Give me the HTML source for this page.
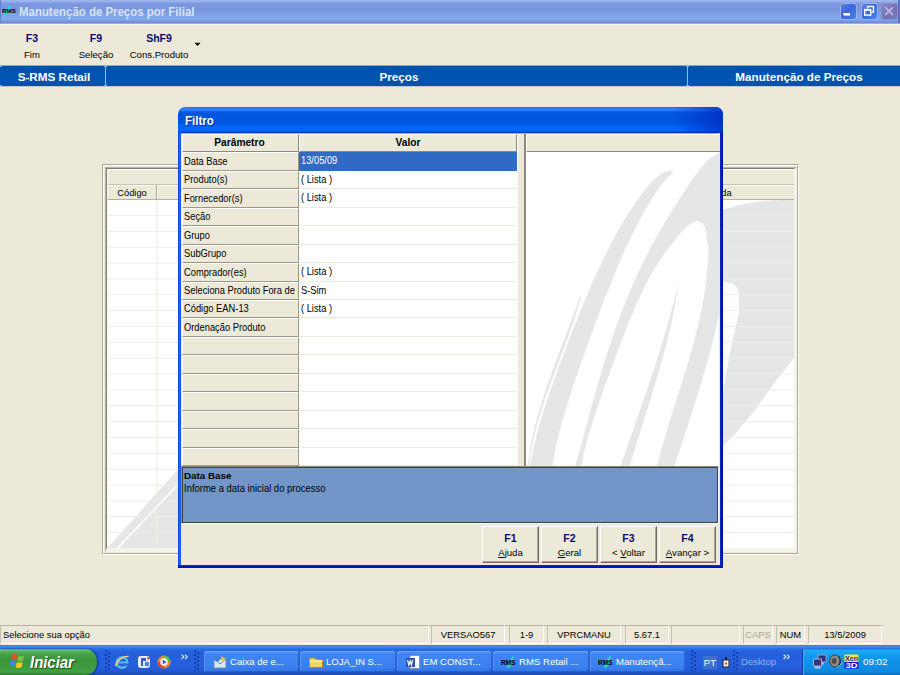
<!DOCTYPE html>
<html>
<head>
<meta charset="utf-8">
<title>Manutenção de Preços por Filial</title>
<style>
*{box-sizing:border-box;margin:0;padding:0}
html,body{width:900px;height:675px;overflow:hidden;background:#ece9d8;font-family:"Liberation Sans",sans-serif;font-size:10px;color:#000}
.abs{position:absolute}
#root{position:relative;width:900px;height:675px;overflow:hidden;background:#ece9d8}
#tbar{left:0;top:0;width:900px;height:23px;background:linear-gradient(to bottom,#9cb5ec 0px,#98b2eb 1.5px,#7f9ce2 3px,#7a96df 4.5px,#7a96df 11px,#7e9fe4 13.5px,#80a7e8 16px,#80a7e8 20px,#7792dd 21.5px,#7189d8 23px)}
#tbar .ttl{left:19px;top:4px;font-weight:bold;font-size:12.5px;color:#d9e3f8;white-space:nowrap;line-height:16px;transform:scaleX(0.915);transform-origin:0 0}
#wline{left:0;top:23px;width:900px;height:2px;background:linear-gradient(to bottom,#aaa9b4 0,#aaa9b4 1px,#f8f6ec 1px,#f8f6ec 2px)}
.wb{position:absolute;top:3px;width:17px;height:17px;border-radius:3px;border:1px solid #9db2ec;background:linear-gradient(135deg,#5b84e6 0,#3f66d8 45%,#4477e4 80%,#4d86ee 100%);overflow:hidden}
.wb svg{position:absolute;left:-1px;top:-1px}
.tb{position:absolute;text-align:center;white-space:nowrap}
.tb b{display:block;font-size:10.5px;color:#0a0a6e;line-height:12px}
.tb span{display:block;font-size:9.6px;line-height:12px;margin-top:5px}
#bbar{left:0;top:66px;width:900px;height:20px;background:#0054b0}
#bbar .t{position:absolute;top:3px;font-weight:bold;font-size:11.7px;color:#fff;line-height:16px;white-space:nowrap;transform:translateX(-50%)}
#bbar .dv{position:absolute;top:0;width:1px;height:20px;background:#93bdec}
.sp{position:absolute;top:625px;height:19px;border:1px solid;border-color:#b5b2a3 #fff #fff #c2bfaf;font-size:9.4px;line-height:17px;text-align:center;white-space:nowrap}
.hd{position:absolute;background:#ece9d8;border:1px solid;border-color:#fff #8d8a7a #8d8a7a #fff;font-weight:bold;font-size:10.2px;line-height:16px;text-align:center;white-space:nowrap}
.pc{position:absolute;left:182px;width:117px;background:#ece9d8;border:1px solid;border-color:#fff #9a9788 #9a9788 #fff;font-size:10.3px;padding:0 0 1px 1px;white-space:nowrap;overflow:hidden;display:flex;align-items:center}
.vc{position:absolute;left:299px;width:218px;border-bottom:1px solid #efecdf;font-size:10.3px;padding-left:2px;white-space:nowrap}
.btn{position:absolute;top:526px;width:57px;height:37px;border:1px solid;border-color:#fff #716f64 #716f64 #fff;box-shadow:inset -1px -1px 0 #aca899;text-align:center;white-space:nowrap}
.btn b{display:block;font-size:10.5px;color:#0a0a6e;line-height:12px;margin-top:5px}
.btn span{display:block;font-size:9.6px;line-height:12px;margin-top:3px}
.sx{display:inline-block;transform:scaleX(0.905);transform-origin:0 50%;white-space:nowrap}
.hdl{position:absolute;top:5px;width:6px;height:21px;background-image:radial-gradient(circle at 1.2px 1.2px,#173fa8 0.9px,rgba(0,0,0,0) 1.3px),radial-gradient(circle at 4.2px 3.2px,#173fa8 0.9px,rgba(0,0,0,0) 1.3px);background-size:6px 4px}
.tbtn{position:absolute;top:6px;height:21px;border-radius:3px;background:linear-gradient(to bottom,#5a9bf6 0,#3f86f3 3px,#3a80f0 16px,#3274e4 21px);box-shadow:inset 1px 1px 0 rgba(120,170,255,0.5),inset -1px -1px 0 rgba(20,60,170,0.4);color:#fff;font-size:9.6px;line-height:21px;white-space:nowrap;overflow:hidden}
.tbtn svg{position:absolute;left:8px;top:3px}
.tbtn span{position:absolute;left:26px;top:0}
</style>
</head>
<body>
<div id="root">
<div id="tbar" class="abs"><div class="abs ttl">Manutenção de Preços por Filial</div></div>
<div id="wline" class="abs"></div>
<div class="abs" style="left:0;top:0;width:1px;height:23px;background:#6a7fd0"></div>
<div class="abs" style="left:898px;top:0;width:2px;height:23px;background:#5f6fc4"></div>
<svg class="abs" style="left:2px;top:4px" width="15" height="13" viewBox="0 0 15 13"><path d="M2,11.5 C3,7 6.5,2 8.8,0.8 C9.2,4.5 6.5,9.5 2.6,11.8Z" fill="#19e0d0"/><text x="0" y="8.6" font-family="Liberation Sans,sans-serif" font-weight="bold" font-size="4.6" fill="#000" textLength="14" lengthAdjust="spacingAndGlyphs">RMS</text></svg>
<div class="wb" style="left:840px"><svg width="17" height="17" viewBox="0 0 17 17"><rect x="3.5" y="10" width="6.5" height="2.6" fill="#fff"/></svg></div>
<div class="wb" style="left:861px"><svg width="17" height="17" viewBox="0 0 17 17"><path d="M6.5,5.5 V3.5 H12.5 V9 H10.5" fill="none" stroke="#fff" stroke-width="1.4"/><rect x="3.7" y="6.6" width="6" height="5.5" fill="none" stroke="#fff" stroke-width="1.4"/><rect x="3.7" y="6.4" width="6" height="1.4" fill="#fff"/></svg></div>
<div class="wb" style="left:881px;background:linear-gradient(135deg,#8a86c4,#7472b4 60%,#7a78ba);border-color:#8f8cc8"><svg width="17" height="17" viewBox="0 0 17 17"><path d="M4.2,4.2 L12,12 M12,4.2 L4.2,12" stroke="#b9b4dc" stroke-width="1.8" fill="none"/></svg></div>
<svg class="abs" style="left:194px;top:42px" width="7" height="5" viewBox="0 0 7 5"><path d="M0.5,0.8 H6.5 L3.5,4Z" fill="#000"/></svg>
<div class="tb" style="left:12px;top:32px;width:40px"><b>F3</b><span>Fim</span></div>
<div class="tb" style="left:70px;top:32px;width:52px"><b>F9</b><span>Seleção</span></div>
<div class="tb" style="left:124px;top:32px;width:70px"><b>ShF9</b><span>Cons.Produto</span></div>
<div class="abs" style="left:0;top:65px;width:900px;height:1px;background:#8fa8c8"></div><div class="abs" style="left:0;top:86px;width:900px;height:1px;background:#c0c6cf"></div>
<div id="bbar" class="abs">
  <div class="t" style="left:54px">S-RMS Retail</div>
  <div class="t" style="left:399px">Preços</div>
  <div class="t" style="left:799px">Manutenção de Preços</div>
  <div class="dv" style="left:105px"></div><div class="abs" style="left:104px;top:0;width:3px;height:1px;background:#7fb0e6"></div><div class="abs" style="left:104px;top:19px;width:3px;height:1px;background:#7fb0e6"></div>
  <div class="abs" style="left:686px;top:0;width:3px;height:1px;background:#7fb0e6"></div><div class="abs" style="left:686px;top:19px;width:3px;height:1px;background:#7fb0e6"></div>
  <div class="abs" style="left:0;top:0;width:2px;height:1px;background:#7fb0e6"></div><div class="abs" style="left:0;top:19px;width:2px;height:1px;background:#7fb0e6"></div>
  <div class="dv" style="left:687px"></div>
</div>
<div class="abs" style="left:102px;top:164px;width:697px;height:391px;border:1px solid;border-color:#aca899 #fff #fff #aca899"></div>
<div class="abs" style="left:103px;top:165px;width:695px;height:389px;border:1px solid;border-color:#fff #aca899 #aca899 #fff"></div>
<div class="abs" style="left:105px;top:167px;width:692px;height:385px;border:1px solid;border-color:#b9b6a7 #f5f3ea #f5f3ea #b9b6a7"></div>
<div class="abs" style="left:794px;top:169px;width:3px;height:383px;background:#f5f3ea"></div>
<div class="abs" style="left:107px;top:548px;width:690px;height:4px;background:#f5f3ea"></div>
<div class="abs" style="left:106px;top:168px;width:689px;height:381px;border:1px solid;border-color:#817e6f #f5f3ea #f5f3ea #817e6f"></div>
<div class="abs" id="mgrid" style="left:107px;top:169px;width:687px;height:379px;background:#fff;overflow:hidden">
<svg class="abs" style="left:0;top:0" width="687" height="379" viewBox="107 169 687 379">
  <path d="M107.5,548 L178,469.5 L178,548 Z" fill="#e5e7e6"/>
  <path d="M116.5,548 L176,485.5 L178,485.5 L119,548 Z" fill="#fff"/>
  <path d="M722,210.5 C732,206.5 750,202 770,200.6 L794,199.5 L794,358 L775,382 L755,410 L735,434 L722,447 Z" fill="#e5e7e6"/>
  <path d="M722,281 L733,284 Q739,288 739,296 L739,312 L735,330 L730,352 L726,375 L722,396 Z" fill="#fff"/>
  <line x1="107" x2="794" y1="215.6" y2="215.6" stroke="#f0ede1" stroke-width="1"/>
  <line x1="107" x2="794" y1="231.5" y2="231.5" stroke="#f0ede1" stroke-width="1"/>
  <line x1="107" x2="794" y1="247.3" y2="247.3" stroke="#f0ede1" stroke-width="1"/>
  <line x1="107" x2="794" y1="263.2" y2="263.2" stroke="#f0ede1" stroke-width="1"/>
  <line x1="107" x2="794" y1="279.0" y2="279.0" stroke="#f0ede1" stroke-width="1"/>
  <line x1="107" x2="794" y1="294.8" y2="294.8" stroke="#f0ede1" stroke-width="1"/>
  <line x1="107" x2="794" y1="310.7" y2="310.7" stroke="#f0ede1" stroke-width="1"/>
  <line x1="107" x2="794" y1="326.5" y2="326.5" stroke="#f0ede1" stroke-width="1"/>
  <line x1="107" x2="794" y1="342.4" y2="342.4" stroke="#f0ede1" stroke-width="1"/>
  <line x1="107" x2="794" y1="358.2" y2="358.2" stroke="#f0ede1" stroke-width="1"/>
  <line x1="107" x2="794" y1="374.0" y2="374.0" stroke="#f0ede1" stroke-width="1"/>
  <line x1="107" x2="794" y1="389.9" y2="389.9" stroke="#f0ede1" stroke-width="1"/>
  <line x1="107" x2="794" y1="405.7" y2="405.7" stroke="#f0ede1" stroke-width="1"/>
  <line x1="107" x2="794" y1="421.6" y2="421.6" stroke="#f0ede1" stroke-width="1"/>
  <line x1="107" x2="794" y1="437.4" y2="437.4" stroke="#f0ede1" stroke-width="1"/>
  <line x1="107" x2="794" y1="453.2" y2="453.2" stroke="#f0ede1" stroke-width="1"/>
  <line x1="107" x2="794" y1="469.1" y2="469.1" stroke="#f0ede1" stroke-width="1"/>
  <line x1="107" x2="794" y1="484.9" y2="484.9" stroke="#f0ede1" stroke-width="1"/>
  <line x1="107" x2="794" y1="500.8" y2="500.8" stroke="#f0ede1" stroke-width="1"/>
  <line x1="107" x2="794" y1="516.6" y2="516.6" stroke="#f0ede1" stroke-width="1"/>
  <line x1="107" x2="794" y1="532.4" y2="532.4" stroke="#f0ede1" stroke-width="1"/>
  <line x1="107" x2="794" y1="548.3" y2="548.3" stroke="#f0ede1" stroke-width="1"/>
  <line x1="156.8" x2="156.8" y1="199" y2="548" stroke="#f0ede1" stroke-width="1"/>
</svg>
<div class="abs" style="left:0;top:0;width:687px;height:16px;background:#ece9d8;border-top:1px solid #fff;border-left:1px solid #fff;border-bottom:1px solid #c6c3b3"></div>
<div class="abs" style="left:0;top:16px;width:687px;height:15px;background:#ece9d8;border-top:1px solid #fbfaf5;border-left:1px solid #fff;border-bottom:1px solid #b5b2a2"></div>
<div class="abs" style="left:49px;top:16px;width:1px;height:15px;background:#aca899"></div>
<div class="abs" style="left:50px;top:17px;width:1px;height:13px;background:#fbfaf5"></div>
<div class="abs" style="left:0;top:18px;width:50px;text-align:center;font-size:9.3px;line-height:12px">Código</div>
<div class="abs" style="left:607.5px;top:18px;font-size:9.3px;line-height:12px">cida</div>
</div>
<div class="abs" id="dlg" style="left:178px;top:107px;width:545px;height:461px;background:#ece9d8;border-radius:7px 7px 0 0;overflow:hidden">
 <div class="abs" style="left:0;top:0;width:545px;height:26px;background:linear-gradient(to bottom,#2162e0 0,#2f80f6 1px,#2a7cf4 3px,#0a5ce8 5px,#0055e0 6.5px,#0055e0 16.5px,#0062f4 18.5px,#0066f8 20px,#0066f8 23.5px,#0a48cc 24.7px,#0a3cc0 26px)"></div>
 <div class="abs" style="left:495px;top:0;width:50px;height:26px;background:linear-gradient(to right,rgba(0,40,190,0),rgba(0,40,190,0.75))"></div>
 <div class="abs" style="left:7px;top:6px;font-weight:bold;font-size:12.5px;line-height:16px;color:#fff;text-shadow:1px 1px 0 #0a2a8a;transform:scaleX(0.92);transform-origin:0 0;white-space:nowrap">Filtro</div>
 <div class="abs" style="left:0;top:25px;width:3px;height:436px;background:linear-gradient(to right,#0a3fd8,#1e62ee,#1a5ae6)"></div>
 <div class="abs" style="left:542px;top:25px;width:3px;height:436px;background:linear-gradient(to right,#0a2fc8,#0019b4,#001590)"></div>
 <div class="abs" style="left:0;top:458px;width:545px;height:3px;background:linear-gradient(to bottom,#0a2fc8,#0019b4,#001590)"></div>
</div>
<div class="abs" style="left:181px;top:133px;width:538px;height:1px;background:#b0ad9e"></div>
<div class="abs" style="left:182px;top:134px;width:335px;height:332px;background:#fff"></div>
<div class="abs" style="left:517px;top:134px;width:7px;height:332px;background:#ece9d8;border-left:1px solid #fff"></div>
<div class="abs" style="left:524px;top:134px;width:2px;height:332px;background:#8d8a7a"></div>
<div class="abs" style="left:526px;top:134px;width:193px;height:332px;background:#fff"></div>
<svg class="abs" style="left:526px;top:152px" width="193" height="314" viewBox="526 152 193 314"><g fill="#e5e7e6">
 <path d="M670.3,170.8 C668.9,171.2 665.0,171.5 662.0,173.3 C659.0,175.1 655.3,178.4 652.0,181.7 C648.7,185.0 645.3,188.9 642.0,193.3 C638.7,197.7 634.4,204.7 632.0,208.3 C629.6,211.9 629.6,211.6 627.5,215.0 C625.3,218.4 621.7,224.3 619.0,229.0 C616.4,233.7 613.8,238.3 611.4,243.0 C608.9,247.7 606.6,252.3 604.3,257.0 C602.0,261.7 599.8,266.3 597.7,271.0 C595.5,275.7 593.5,280.3 591.4,285.0 C589.4,289.7 587.4,294.3 585.5,299.0 C583.5,303.7 581.6,308.3 579.7,313.0 C577.8,317.7 576.0,322.3 574.1,327.0 C572.3,331.7 570.5,336.3 568.7,341.0 C566.8,345.7 565.1,350.3 563.3,355.0 C561.5,359.7 559.8,364.3 558.1,369.0 C556.4,373.7 554.7,378.3 553.0,383.0 C551.4,387.7 549.8,392.3 548.2,397.0 C546.6,401.7 545.1,406.3 543.6,411.0 C542.1,415.7 540.7,420.3 539.4,425.0 C538.0,429.7 536.7,434.3 535.6,439.0 C534.4,443.7 533.3,448.5 532.4,453.0 C531.4,457.5 530.4,463.8 530.0,466.0 L552.6,466.0 C553.0,463.8 553.9,457.5 554.7,453.0 C555.6,448.5 556.6,443.7 557.7,439.0 C558.8,434.3 560.0,429.7 561.3,425.0 C562.5,420.3 563.9,415.7 565.3,411.0 C566.7,406.3 568.1,401.7 569.6,397.0 C571.1,392.3 572.6,387.7 574.2,383.0 C575.8,378.3 577.4,373.7 579.0,369.0 C580.6,364.3 582.3,359.7 583.9,355.0 C585.6,350.3 587.3,345.7 589.0,341.0 C590.7,336.3 592.4,331.7 594.1,327.0 C595.8,322.3 597.6,317.7 599.3,313.0 C601.1,308.3 602.9,303.7 604.7,299.0 C606.5,294.3 608.3,289.7 610.1,285.0 C612.0,280.3 613.9,275.7 615.8,271.0 C617.8,266.3 619.7,261.7 621.8,257.0 C623.9,252.3 625.9,247.7 628.1,243.0 C630.3,238.3 632.6,233.7 635.0,229.0 C637.4,224.3 640.7,218.2 642.4,215.0 C644.2,211.8 643.2,213.6 645.3,210.0 C647.4,206.4 652.0,198.3 655.3,193.3 C658.6,188.3 662.2,183.5 665.3,180.0 C668.4,176.5 672.3,173.8 673.7,172.5Z"/>
 <path d="M580.0,296.0 C578.6,300.0 573.8,313.7 571.5,320.0 C569.2,326.3 568.0,329.3 566.2,334.0 C564.5,338.7 562.7,343.3 560.9,348.0 C559.1,352.7 557.4,357.3 555.7,362.0 C553.9,366.7 552.2,371.3 550.6,376.0 C548.9,380.7 547.3,385.3 545.7,390.0 C544.2,394.7 542.6,399.3 541.2,404.0 C539.8,408.7 538.4,413.3 537.1,418.0 C535.9,422.7 534.6,427.3 533.6,432.0 C532.5,436.7 531.6,440.3 530.6,446.0 C529.6,451.7 528.1,462.7 527.6,466.0 L529.0,466.0 C529.5,462.7 531.0,451.7 532.0,446.0 C533.0,440.3 534.0,436.7 535.2,432.0 C536.3,427.3 537.6,422.7 539.0,418.0 C540.4,413.3 541.9,408.7 543.4,404.0 C544.9,399.3 546.6,394.7 548.2,390.0 C549.9,385.3 551.6,380.7 553.4,376.0 C555.1,371.3 556.9,366.7 558.6,362.0 C560.4,357.3 562.2,352.7 563.9,348.0 C565.7,343.3 567.4,338.7 569.1,334.0 C570.8,329.3 572.1,326.2 574.1,320.0 C576.1,313.8 579.8,300.8 581.0,297.0Z"/>
 <path d="M575.3,466.0 C575.9,463.7 577.9,456.7 579.2,452.0 C580.5,447.3 581.8,442.7 583.1,438.0 C584.4,433.3 585.6,428.7 586.9,424.0 C588.1,419.3 589.4,414.7 590.7,410.0 C591.9,405.3 593.2,400.7 594.5,396.0 C595.8,391.3 597.1,386.7 598.5,382.0 C599.8,377.3 601.2,372.7 602.6,368.0 C604.0,363.3 605.4,358.7 606.9,354.0 C608.4,349.3 609.9,344.7 611.5,340.0 C613.1,335.3 614.7,330.7 616.4,326.0 C618.0,321.3 619.8,316.7 621.6,312.0 C623.4,307.3 625.2,302.7 627.1,298.0 C629.1,293.3 631.1,288.7 633.1,284.0 C635.2,279.3 637.3,274.7 639.5,270.0 C641.7,265.3 644.0,260.7 646.4,256.0 C648.8,251.3 651.2,246.7 653.7,242.0 C656.3,237.3 658.9,232.7 661.6,228.0 C664.3,223.3 667.1,218.7 669.9,214.0 C672.8,209.3 676.8,203.2 678.8,200.0 C680.8,196.8 679.8,198.3 682.0,195.0 C684.2,191.7 688.7,184.7 692.0,180.0 C695.3,175.3 699.0,170.3 702.0,166.7 C705.0,163.1 707.0,160.8 710.3,158.3 C713.6,155.8 720.0,152.6 722.0,151.5 L722,300 C721.7,301.7 720.5,307.5 720.0,310.0 C719.5,312.5 719.7,311.8 719.1,315.0 C718.4,318.2 717.0,324.3 715.9,329.0 C714.8,333.7 713.7,338.3 712.5,343.0 C711.3,347.7 710.0,352.3 708.7,357.0 C707.4,361.7 706.1,366.3 704.7,371.0 C703.4,375.7 702.0,380.3 700.6,385.0 C699.2,389.7 697.7,394.3 696.3,399.0 C694.8,403.7 693.3,408.3 691.8,413.0 C690.3,417.7 688.8,422.3 687.3,427.0 C685.8,431.7 684.3,436.3 682.8,441.0 C681.2,445.7 679.6,450.8 678.2,455.0 C676.9,459.2 675.2,464.2 674.7,466.0 L657.2,466.0 C657.8,463.7 659.5,456.7 660.7,452.0 C662.0,447.3 663.3,442.7 664.7,438.0 C666.0,433.3 667.4,428.7 668.9,424.0 C670.3,419.3 671.8,414.7 673.2,410.0 C674.7,405.3 676.2,400.7 677.6,396.0 C679.1,391.3 680.6,386.7 682.1,382.0 C683.5,377.3 685.0,372.7 686.4,368.0 C687.8,363.3 689.2,358.7 690.5,354.0 C691.8,349.3 693.1,344.7 694.4,340.0 C695.6,335.3 696.8,330.7 697.9,326.0 C699.0,321.3 700.1,316.7 701.0,312.0 C702.0,307.3 702.9,302.7 703.6,298.0 C704.4,293.3 705.1,288.7 705.7,284.0 C706.3,279.3 706.7,273.7 707.1,270.0 C707.5,266.3 707.8,265.0 708.0,262.0 C708.2,259.0 708.4,255.1 708.3,252.0 C708.2,248.9 707.9,246.4 707.5,243.3 C707.1,240.2 706.8,236.4 706.2,233.3 C705.6,230.2 705.2,227.1 703.7,225.0 C702.2,222.9 698.1,221.5 697.0,220.8 C695.6,221.5 691.5,222.9 688.7,225.0 C685.9,227.1 682.8,230.5 680.3,233.3 C677.8,236.1 675.9,238.9 673.7,241.7 C671.5,244.5 668.7,247.8 667.0,250.0 C665.3,252.2 665.5,251.8 663.4,255.0 C661.3,258.2 657.2,264.3 654.4,269.0 C651.6,273.7 649.0,278.3 646.6,283.0 C644.1,287.7 641.9,292.3 639.7,297.0 C637.5,301.7 635.5,306.3 633.5,311.0 C631.5,315.7 629.6,320.3 627.7,325.0 C625.9,329.7 624.1,334.3 622.3,339.0 C620.5,343.7 618.8,348.3 617.0,353.0 C615.3,357.7 613.6,362.3 611.9,367.0 C610.2,371.7 608.5,376.3 606.8,381.0 C605.1,385.7 603.4,390.3 601.8,395.0 C600.2,399.7 598.5,404.3 596.9,409.0 C595.4,413.7 593.8,418.3 592.3,423.0 C590.9,427.7 589.4,432.3 588.1,437.0 C586.8,441.7 585.5,446.2 584.4,451.0 C583.3,455.8 581.9,463.5 581.4,466.0Z"/>
 <path d="M678.0,285.0 C677.4,287.5 675.5,295.2 674.3,300.0 C673.0,304.8 671.9,309.3 670.6,314.0 C669.3,318.7 668.0,323.3 666.7,328.0 C665.3,332.7 663.9,337.3 662.5,342.0 C661.1,346.7 659.6,351.3 658.1,356.0 C656.6,360.7 655.1,365.3 653.6,370.0 C652.0,374.7 650.5,379.3 648.9,384.0 C647.3,388.7 645.7,393.3 644.1,398.0 C642.5,402.7 640.9,407.3 639.3,412.0 C637.6,416.7 636.0,421.3 634.4,426.0 C632.8,430.7 631.1,435.3 629.5,440.0 C627.9,444.7 626.2,449.7 624.7,454.0 C623.2,458.3 621.3,464.0 620.6,466.0 L629.5,466.0 C630.2,464.0 631.9,458.3 633.3,454.0 C634.6,449.7 636.2,444.7 637.7,440.0 C639.2,435.3 640.7,430.7 642.1,426.0 C643.6,421.3 645.1,416.7 646.6,412.0 C648.0,407.3 649.5,402.7 651.0,398.0 C652.4,393.3 653.8,388.7 655.2,384.0 C656.6,379.3 658.0,374.7 659.3,370.0 C660.7,365.3 662.0,360.7 663.3,356.0 C664.5,351.3 665.7,346.7 666.9,342.0 C668.1,337.3 669.2,332.7 670.3,328.0 C671.3,323.3 672.4,318.7 673.3,314.0 C674.2,309.3 675.3,303.7 675.9,300.0 C676.5,296.3 676.6,294.5 677.0,292.0 C677.4,289.5 678.1,286.2 678.3,285.0Z"/>
</g></svg>
<div class="hd" style="left:182px;top:134px;width:117px;height:18px;padding-right:2px">Parâmetro</div>
<div class="hd" style="left:299px;top:134px;width:218px;height:18px">Valor</div>
<div class="hd" style="left:526px;top:134px;width:194px;height:18px;border-right:none"></div>
<div class="pc" style="top:152px;height:19px"><span class="sx">Data Base</span></div><div class="abs" style="left:299px;top:152px;width:218px;height:19px;background:#316ac5;color:#fff;font-size:10.3px;line-height:18px;padding-left:2px"><span class="sx">13/05/09</span></div>
<div class="pc" style="top:171px;height:18px"><span class="sx">Produto(s)</span></div><div class="vc" style="top:171px;height:18px;line-height:17px"><span class="sx">( Lista )</span></div>
<div class="pc" style="top:189px;height:19px"><span class="sx">Fornecedor(s)</span></div><div class="vc" style="top:189px;height:19px;line-height:18px"><span class="sx">( Lista )</span></div>
<div class="pc" style="top:208px;height:18px"><span class="sx">Seção</span></div><div class="vc" style="top:208px;height:18px;line-height:17px"><span class="sx"></span></div>
<div class="pc" style="top:226px;height:19px"><span class="sx">Grupo</span></div><div class="vc" style="top:226px;height:19px;line-height:18px"><span class="sx"></span></div>
<div class="pc" style="top:245px;height:18px"><span class="sx">SubGrupo</span></div><div class="vc" style="top:245px;height:18px;line-height:17px"><span class="sx"></span></div>
<div class="pc" style="top:263px;height:19px"><span class="sx">Comprador(es)</span></div><div class="vc" style="top:263px;height:19px;line-height:18px"><span class="sx">( Lista )</span></div>
<div class="pc" style="top:282px;height:18px"><span class="sx">Seleciona Produto Fora de</span></div><div class="vc" style="top:282px;height:18px;line-height:17px"><span class="sx">S-Sim</span></div>
<div class="pc" style="top:300px;height:18px"><span class="sx">Código EAN-13</span></div><div class="vc" style="top:300px;height:18px;line-height:17px"><span class="sx">( Lista )</span></div>
<div class="pc" style="top:318px;height:19px"><span class="sx">Ordenação Produto</span></div><div class="vc" style="top:318px;height:19px;line-height:18px"><span class="sx"></span></div>
<div class="pc" style="top:337px;height:18px"><span class="sx"></span></div><div class="vc" style="top:337px;height:18px;line-height:17px"><span class="sx"></span></div>
<div class="pc" style="top:355px;height:19px"><span class="sx"></span></div><div class="vc" style="top:355px;height:19px;line-height:18px"><span class="sx"></span></div>
<div class="pc" style="top:374px;height:18px"><span class="sx"></span></div><div class="vc" style="top:374px;height:18px;line-height:17px"><span class="sx"></span></div>
<div class="pc" style="top:392px;height:19px"><span class="sx"></span></div><div class="vc" style="top:392px;height:19px;line-height:18px"><span class="sx"></span></div>
<div class="pc" style="top:411px;height:18px"><span class="sx"></span></div><div class="vc" style="top:411px;height:18px;line-height:17px"><span class="sx"></span></div>
<div class="pc" style="top:429px;height:19px"><span class="sx"></span></div><div class="vc" style="top:429px;height:19px;line-height:18px"><span class="sx"></span></div>
<div class="pc" style="top:448px;height:18px"><span class="sx"></span></div><div class="vc" style="top:448px;height:18px;line-height:17px"><span class="sx"></span></div>
<div class="abs" style="left:181px;top:466px;width:538px;height:58px;border:1px solid;border-color:#8d8a7a #fff #fff #8d8a7a"></div>
<div class="abs" style="left:182px;top:467px;width:536px;height:56px;background:#7396c8;border:1px solid #404040"></div>
<div class="abs" style="left:184px;top:470px;font-weight:bold;font-size:9.8px;line-height:12px">Data Base</div>
<div class="abs" style="left:184px;top:483px;font-size:10.4px;line-height:12px"><span class="sx" style="transform:scaleX(0.91)">Informe a data inicial do processo</span></div>
<div class="btn" style="left:482px"><b>F1</b><span><u>A</u>juda</span></div>
<div class="btn" style="left:541px"><b>F2</b><span><u>G</u>eral</span></div>
<div class="btn" style="left:600px"><b>F3</b><span>&lt; <u>V</u>oltar</span></div>
<div class="btn" style="left:659px"><b>F4</b><span><u>A</u>vançar &gt;</span></div>
<div class="abs" style="left:0;top:625px;width:883px;height:1px;background:#b5b2a3"></div>
<div class="sp" style="left:0px;width:429px;text-align:left;padding-left:2px;">Selecione sua opção</div>
<div class="sp" style="left:431px;width:74px;">VERSAO567</div>
<div class="sp" style="left:509px;width:35px;">1-9</div>
<div class="sp" style="left:547px;width:74px;">VPRCMANU</div>
<div class="sp" style="left:625px;width:44px;">5.67.1</div>
<div class="sp" style="left:671px;width:69px;"></div>
<div class="sp" style="left:743px;width:30px;"><span style="color:#aca899">CAPS</span></div>
<div class="sp" style="left:776px;width:29px;">NUM</div>
<div class="sp" style="left:808px;width:74px;">13/5/2009</div>
<!-- taskbar -->
<div class="abs" id="task" style="left:0;top:645px;width:900px;height:30px;background:linear-gradient(to bottom,#3168d5 0,#4993e6 1px,#3f85ee 2px,#2a6be3 4px,#245edb 8px,#2560de 20px,#2259d3 26px,#1c47b0 30px)">
 <!-- start -->
 <div class="abs" style="left:0;top:4px;width:97px;height:26px;border-radius:0 11px 11px 0 / 0 13px 13px 0;background:linear-gradient(to bottom,#4f9f4e 0,#6cc26a 1px,#52ae51 3px,#409c40 7px,#3a963a 13px,#3e9d3e 19px,#42a342 23px,#2f7a2f 26px);box-shadow:1px 0 2px rgba(0,0,60,0.55)"></div>
 <svg class="abs" style="left:9px;top:8px" width="17" height="17" viewBox="0 0 17 17">
  <path d="M2.6,1.8 C4.6,0.6 6.6,0.8 8.3,2 L7.1,7.2 C5.4,6.1 3.4,6 1.5,7 Z" fill="#e8502a"/>
  <path d="M9.4,2.6 C11.3,3.7 13.3,3.7 15.3,2.6 L14.1,7.8 C12.2,8.9 10.1,8.9 8.2,7.8 Z" fill="#7cc043"/>
  <path d="M1.2,8.2 C3.1,7.2 5.1,7.3 6.8,8.4 L5.6,13.6 C3.9,12.5 1.9,12.4 0,13.4 Z" fill="#3f86e8"/>
  <path d="M7.9,9 C9.8,10.1 11.8,10.1 13.8,9 L12.6,14.2 C10.7,15.3 8.6,15.3 6.7,14.2 Z" fill="#f7c624"/>
 </svg>
 <div class="abs" style="left:30px;top:8px;font-weight:bold;font-style:italic;font-size:16px;line-height:20px;color:#fff;text-shadow:1px 1px 1px #1d4d1d;transform:scaleX(0.93);transform-origin:0 0">Iniciar</div>
 <!-- handles -->
 <div class="hdl" style="left:105px"></div>
 <div class="hdl" style="left:194px"></div>
 <div class="hdl" style="left:691px"></div>
 <div class="hdl" style="left:733px"></div>
 <!-- quick launch icons -->
 <svg class="abs" style="left:114px;top:9px" width="16" height="16" viewBox="0 0 16 16"><circle cx="8" cy="8.5" r="5.2" fill="none" stroke="#59b5f5" stroke-width="2.6"/><rect x="4" y="7.5" width="9" height="2" fill="#59b5f5"/><rect x="9" y="9.5" width="5" height="2.2" fill="#2a62d8"/><path d="M1.5,12 C3,6 10,1.5 14.5,2.5" fill="none" stroke="#f5d76a" stroke-width="1.3"/></svg>
 <svg class="abs" style="left:136px;top:9px" width="16" height="16" viewBox="0 0 16 16"><rect x="2" y="2" width="12" height="12" rx="3" fill="#e9eef8"/><path d="M5,4 h5 v3 h-3 v5 h-2z" fill="#2b61c9"/><circle cx="11" cy="10" r="2.4" fill="#5a86d8"/><circle cx="12.5" cy="4" r="1.6" fill="#e05a2a"/></svg>
 <svg class="abs" style="left:156px;top:9px" width="16" height="16" viewBox="0 0 16 16"><circle cx="8" cy="8" r="6.5" fill="#f08a24"/><path d="M8,1.5 A6.5,6.5 0 0 1 14.5,8 L8,8Z" fill="#62b846"/><path d="M8,14.5 A6.5,6.5 0 0 1 1.5,8 L8,8Z" fill="#e8482a"/><circle cx="8" cy="8" r="3.8" fill="#f4f6fb"/><path d="M6.8,5.8 L10.6,8 L6.8,10.2Z" fill="#2c56b8"/></svg>
 <svg class="abs" style="left:181px;top:9px" width="8" height="6" viewBox="0 0 8 6"><path d="M0.6,0.6 L2.8,2.8 L0.6,5 M4,0.6 L6.2,2.8 L4,5" fill="none" stroke="#e6eefc" stroke-width="1.1"/></svg>
 <div class="tbtn" style="left:204px;width:95px"><svg width="16" height="16" viewBox="0 0 16 16"><rect x="2" y="5" width="12" height="9" fill="#dfe8f6" stroke="#6d86b8" stroke-width="1"/><path d="M2,5 L8,10 L14,5" fill="none" stroke="#6d86b8"/><circle cx="5" cy="4.5" r="3" fill="#3f7fe0"/><path d="M9,2 l5,3 -4,2z" fill="#f2c23a"/></svg><span>Caixa de e...</span></div>
 <div class="tbtn" style="left:300px;width:96px"><svg width="16" height="16" viewBox="0 0 16 16"><path d="M1.5,4 h5 l1.5,1.5 h6.5 v8 h-13z" fill="#f4d567" stroke="#b28a1c" stroke-width="1"/><path d="M1.5,7 h13" stroke="#fbe9a0" stroke-width="1.5"/></svg><span>LOJA_IN S...</span></div>
 <div class="tbtn" style="left:397px;width:95px"><svg width="16" height="16" viewBox="0 0 16 16"><rect x="5" y="1.5" width="9.5" height="13" fill="#fff" stroke="#7f8fb8"/><rect x="1" y="4" width="9" height="9" fill="#2a4fa8"/><path d="M2.5,6 l1.3,5 1.3,-4 1.3,4 1.3,-5" fill="none" stroke="#fff" stroke-width="1.2"/></svg><span>EM CONST...</span></div>
 <div class="tbtn" style="left:493px;width:96px"><svg width="18" height="16" viewBox="0 0 18 16"><path d="M6,14 C7,8 10,3 13,1.5 C13,6 11,11 8,14Z" fill="#1fd6c4"/><text x="0" y="11" font-family="Liberation Sans,sans-serif" font-weight="bold" font-size="6.5" fill="#000">RMS</text></svg><span>RMS Retail ...</span></div>
 <div class="tbtn" style="left:590px;width:95px"><svg width="18" height="16" viewBox="0 0 18 16"><path d="M6,14 C7,8 10,3 13,1.5 C13,6 11,11 8,14Z" fill="#1fd6c4"/><text x="0" y="11" font-family="Liberation Sans,sans-serif" font-weight="bold" font-size="6.5" fill="#000">RMS</text></svg><span>Manutençã...</span></div>
 <div class="abs" style="left:703px;top:11px;width:14px;height:13px;background:#4070d2;color:#fff;font-size:9.6px;line-height:13px;text-align:center">PT</div>
 <svg class="abs" style="left:722px;top:11px" width="8" height="12" viewBox="0 0 8 12"><rect x="1" y="4" width="6" height="7" fill="#f2f2f2" stroke="#222" stroke-width="1"/><rect x="3" y="1" width="2" height="3" fill="#222"/><rect x="3" y="6.5" width="2" height="2" fill="#d33"/></svg>
 <div class="abs" style="left:741px;top:10px;font-size:9.6px;line-height:13px;color:#8fb0ee">Desktop</div>
 <svg class="abs" style="left:783px;top:9px" width="8" height="6" viewBox="0 0 8 6"><path d="M0.6,0.6 L2.8,2.8 L0.6,5 M4,0.6 L6.2,2.8 L4,5" fill="none" stroke="#e6eefc" stroke-width="1.1"/></svg>
 <!-- tray -->
 <div class="abs" style="left:802px;top:4px;width:98px;height:26px;background:linear-gradient(to bottom,#0f74cc 0,#1fb0f6 1px,#1aa5f2 3px,#1296ea 8px,#0f8ee6 18px,#0e88de 23px,#0b6cc0 26px);border-left:1px solid #0a3f96;box-shadow:inset 1px 0 0 #2cb4f6"></div>
 <svg class="abs" style="left:812px;top:9px" width="16" height="16" viewBox="0 0 16 16"><rect x="6" y="1" width="8" height="7" fill="#2d2d78" stroke="#9aa2c8" stroke-width="1"/><rect x="8" y="8.5" width="4" height="2" fill="#b9bfd8"/><rect x="1.5" y="5" width="8" height="7" fill="#34347e" stroke="#aab2d4" stroke-width="1"/><rect x="2.5" y="12.5" width="6" height="2" fill="#c5cbe0"/></svg>
 <svg class="abs" style="left:828px;top:9px" width="18" height="16" viewBox="0 0 18 16"><ellipse cx="7" cy="7" rx="5.2" ry="6" fill="#8e8b86" stroke="#45433f"/><ellipse cx="6.2" cy="7" rx="2.4" ry="3" fill="#4d4a46"/><path d="M10.5,2 q3.5,5 0,10" stroke="#2a2a2a" fill="none" stroke-width="1.2"/><path d="M9,14 L15,8" stroke="#9db4ee" stroke-width="1"/></svg>
 <svg class="abs" style="left:844px;top:9px" width="16" height="16" viewBox="0 0 16 16"><rect x="0.5" y="0.5" width="14" height="7.5" fill="#f4ea2a"/><text x="1" y="7" font-family="Liberation Sans,sans-serif" font-weight="bold" font-size="7.5" fill="#1c2fb0" textLength="13" lengthAdjust="spacingAndGlyphs">Xen</text><rect x="0.5" y="8" width="14" height="6.5" fill="#1414d8"/><text x="1.5" y="14" font-family="Liberation Sans,sans-serif" font-weight="bold" font-size="7" fill="#fff" textLength="12" lengthAdjust="spacingAndGlyphs">3D</text></svg>
 <div class="abs" style="left:863px;top:10px;font-size:9.8px;line-height:13px;color:#fff">09:02</div>
</div>
</div>
</body>
</html>
